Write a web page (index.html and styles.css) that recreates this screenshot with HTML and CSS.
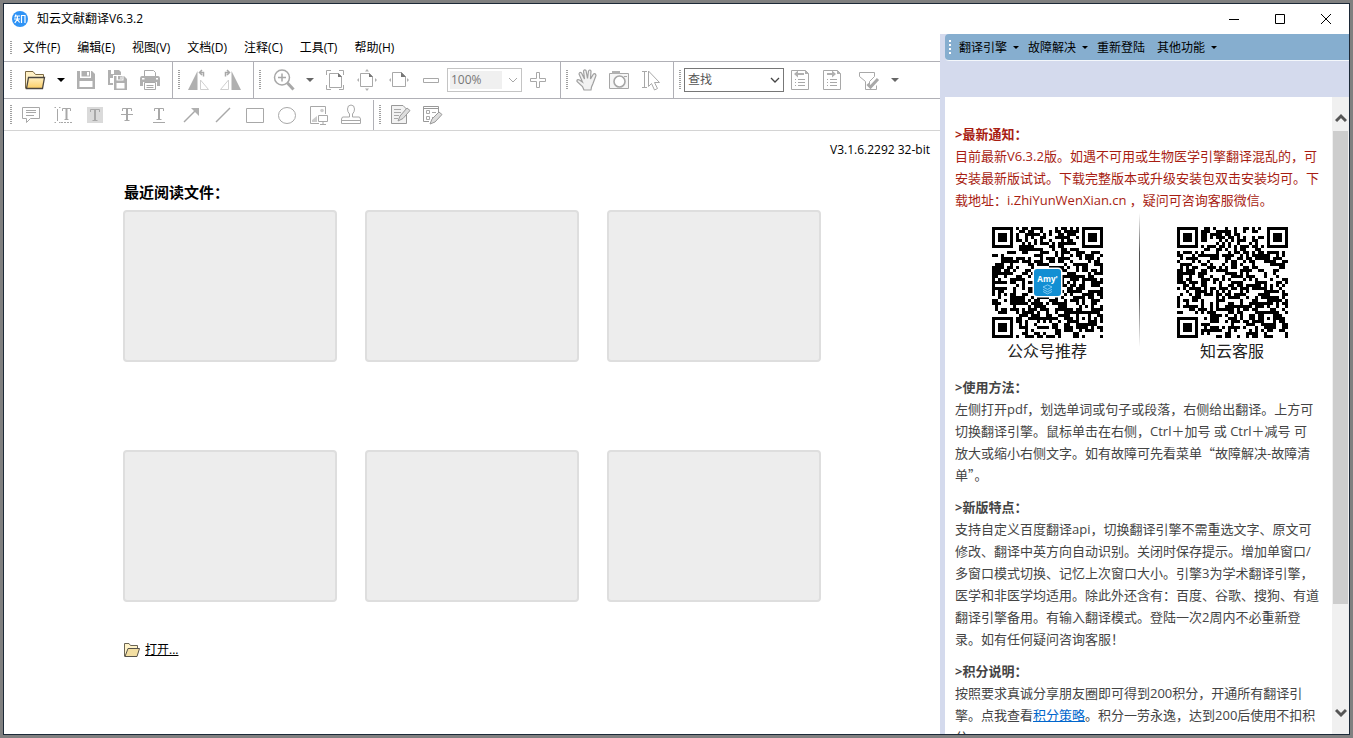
FILE: index.html
```html
<!DOCTYPE html>
<html lang="zh-CN">
<head>
<meta charset="utf-8">
<title>知云文献翻译V6.3.2</title>
<link rel="stylesheet" href="styles.css">
</head>
<body>
<div class="window">
  <header class="titlebar">
    <svg class="logo" viewBox="0 0 16 16"><circle cx="8" cy="8" r="8" fill="#2f93f5"/><path d="M4 3.500L2.800 6.500M3.500 5H8M2 8H8M5.400 5V8L2.800 12M5.400 8.500L7.600 11.500M9.500 12V4.500H13V12" fill="none" stroke="#fff" stroke-width="1.200"/></svg>
    <h1 class="title">知云文献翻译V6.3.2</h1>
    <div class="controls">
      <button class="control" aria-label="最小化"><svg viewBox="0 0 12 12"><path d="M1 6.500H11"/></svg></button>
      <button class="control" aria-label="最大化"><svg viewBox="0 0 12 12"><path d="M1.500 1.500H10.500V10.500H1.500Z"/></svg></button>
      <button class="control" aria-label="关闭"><svg viewBox="0 0 12 12"><path d="M1 1L11 11M11 1L1 11"/></svg></button>
    </div>
  </header>

  <div class="panes">
    <main class="reader">
      <nav class="menubar">
        <span class="grip"></span>
        <button class="menu">文件(F)</button>
        <button class="menu">编辑(E)</button>
        <button class="menu">视图(V)</button>
        <button class="menu">文档(D)</button>
        <button class="menu">注释(C)</button>
        <button class="menu">工具(T)</button>
        <button class="menu">帮助(H)</button>
      </nav>

      <div class="toolbar">
        <div class="group group-first">
          <span class="grip"></span>
          <button class="tool" aria-label="打开"><svg viewBox="0 0 24 24"><defs><linearGradient id="fold" x1="0" y1="0" x2="0" y2="1"><stop offset="0" stop-color="#fff0c4"/><stop offset="1" stop-color="#fbcd63"/></linearGradient></defs><path d="M2.500 20.500V3.500H10L12.500 6.500H20.500V11" fill="#fff0c4" stroke="#7c6a45"/><path d="M3.500 20.500L5.500 9.500H21.500L19.500 20.500Z" fill="url(#fold)" stroke="#4a4540" stroke-width="1.300"/></svg></button>
          <button class="drop dark" aria-label="打开选项"></button>
          <button class="tool" aria-label="保存"><svg viewBox="0 0 24 24"><path d="M3 3H18L21 6V21H3Z" class="f"/><path d="M6 3H17V10H6ZM5.500 13H18.500V19H5.500Z" fill="#fff"/><path d="M7.500 3H16V8.500H7.500Z" class="f"/><path d="M13 4H15V7.500H13Z" fill="#fff"/></svg></button>
          <button class="tool" aria-label="全部保存"><svg viewBox="0 0 24 24"><path d="M2 2H13L15 4V17H2Z" class="f"/><path d="M5 2V6H8V2M4 10H7V15H4Z" fill="#fff"/><path d="M7 7H18L21.500 10.500V22.500H7Z" fill="#fff"/><path d="M8 8H18L21 11V22H8Z" class="f"/><path d="M10.500 8H17.500V12.500H10.500ZM10.500 15H18.500V20.500H10.500Z" fill="#fff"/><path d="M12 8H16.500V11.500H12Z" class="f"/><path d="M14.500 8.500H15.500V11H14.500Z" fill="#fff"/></svg></button>
          <button class="tool" aria-label="打印"><svg viewBox="0 0 24 24"><path d="M6.500 8V2.500H15.500L17.500 4.500V8" class="s"/><path d="M2 11Q2 8 4 8H20Q22 8 22 11V18H2Z" class="f"/><path d="M5 14H19V21H5ZM4 10H6.500V11.500H4ZM18 10H20V11.500H18Z" fill="#fff"/><path d="M6.500 14.500H17.500V21.500H6.500ZM8.500 17.500H15.500M8.500 19.500H15.500" class="s"/></svg></button>
        </div>
        <div class="group group-tight">
          <span class="grip"></span>
          <button class="tool" aria-label="向左旋转"><svg viewBox="0 0 24 24"><path d="M1 22L10.500 3V22Z" class="f"/><path d="M13.500 12L21.500 21.500H13.500Z" fill="none" stroke="#d0d0d0"/><path d="M12.500 4.500H16.500V8.500M15 2L12.500 4.500L15 7" class="s thick"/></svg></button>
          <button class="tool" aria-label="向右旋转"><svg viewBox="0 0 24 24"><path d="M22 22L12.500 3V22Z" class="f"/><path d="M9.500 12L1.500 21.500H9.500Z" fill="none" stroke="#d0d0d0"/><path d="M10.500 4.500H6.500V8.500M8 2L10.500 4.500L8 7" class="s thick"/></svg></button>
        </div>
        <div class="group group-wide">
          <span class="grip"></span>
          <button class="tool" aria-label="放大工具"><svg viewBox="0 0 24 24"><circle cx="10" cy="9.500" r="7.500" class="s thick"/><path d="M10 5.500V13.500M6 9.500H14" class="s thick"/><path d="M15.500 15L21.500 21.500" class="s thicker"/></svg></button>
          <button class="drop" aria-label="缩放选项"></button>
          <button class="tool" aria-label="适合页面"><svg viewBox="0 0 24 24"><path d="M6.500 5.500H15.500L18.500 8.500V19.500H6.500Z" class="s"/><path d="M15 5L19 9H15Z" fill="#777"/><path d="M3.500 7V2.500H8M16 2.500H20.500V7M20.500 17V21.500H16M8 21.500H3.500V17" class="s"/></svg></button>
          <button class="tool" aria-label="实际大小"><svg viewBox="0 0 24 24"><path d="M5.500 5.500H14.500L17.500 8.500V18.500H5.500Z" class="s"/><path d="M14 5L18 9H14Z" fill="#777"/><path d="M12 1L14 3.500H10ZM12 23L10 20.500H14ZM2 12L4 10V14ZM22 12L20 10V14Z" class="f"/></svg></button>
          <button class="tool" aria-label="适合宽度"><svg viewBox="0 0 24 24"><path d="M5.500 4.500H14.500L18.500 8.500V18.500H5.500Z" class="s"/><path d="M14 4L19 9H14Z" fill="#777"/><path d="M2 12L4 10V14ZM22 12L20 10V14Z" class="f"/></svg></button>
          <button class="tool" aria-label="缩小"><svg viewBox="0 0 24 24"><path d="M4.500 10.500H19.500V14.500H4.500Z" class="s"/></svg></button>
          <span class="combo combo-zoom"><select aria-label="缩放比例" disabled><option>100%</option></select><svg viewBox="0 0 10 10"><path d="M1 3L5 7L9 3" class="s"/></svg></span>
          <button class="tool" aria-label="放大"><svg viewBox="0 0 24 24"><path d="M10.500 4.500H13.500V10.500H19.500V13.500H13.500V19.500H10.500V13.500H4.500V10.500H10.500Z" class="s"/></svg></button>
        </div>
        <div class="group">
          <span class="grip"></span>
          <button class="tool" aria-label="手形工具"><svg viewBox="0 0 24 24"><path d="M9 22L7.500 18.500L2 13.500Q1.500 11 4.500 12L7.500 14L4 6Q4.500 3.500 6.500 5L9.500 11L8.500 3Q9.500 1 11 2.500L12.500 10.500L13.500 3Q15 1 16 3L15.500 11L18.500 6Q20.500 5 21 7.500L18 15.500L16.500 19L16 22Z" fill="#f2f2f2" stroke="#a0a0a0" stroke-width="1.200"/></svg></button>
          <button class="tool" aria-label="截图"><svg viewBox="0 0 24 24"><path d="M2.500 5.500H21.500V20.500H2.500Z" fill="#f5f5f5" stroke="#a6a6a6"/><path d="M5 3H13V6H5Z" class="f"/><circle cx="12.500" cy="13.500" r="5.500" fill="#fff" stroke="#a6a6a6" stroke-width="1.600"/><path d="M17 8.500H20" class="s"/></svg></button>
          <button class="tool" aria-label="选择文本"><svg viewBox="0 0 24 24"><path d="M3 3.500H8M5.500 3.500V19.500M3 19.500H8" class="s"/><path d="M9.500 3L20.500 14.500H15.500L18.500 20.500L15.500 22L12.500 15.500L9.500 18.500Z" class="s"/></svg></button>
        </div>
        <div class="group group-last">
          <span class="grip"></span>
          <span class="combo combo-find"><select aria-label="查找"><option>查找</option></select><svg viewBox="0 0 10 10"><path d="M1 3L5 7L9 3" fill="none" stroke="#444" stroke-width="1.300"/></svg></span>
          <button class="tool" aria-label="查找上一个"><svg viewBox="0 0 24 24"><path d="M3.500 2.500H17.500L20.500 5.500V21.500H3.500Z" class="s"/><path d="M17 2L21 6H17Z" class="f"/><path d="M6 6L10 2.500V5H16V7H10V9.500Z" class="f"/><path d="M7 11.500H8M10 11.500H17M7 14.500H8M10 14.500H17M7 17.500H8M10 17.500H17" class="s"/></svg></button>
          <button class="tool" aria-label="查找下一个"><svg viewBox="0 0 24 24"><path d="M3.500 2.500H17.500L20.500 5.500V21.500H3.500Z" class="s"/><path d="M17 2L21 6H17Z" class="f"/><path d="M16 6L12 2.500V5H7V7H12V9.500Z" class="f"/><path d="M7 11.500H8M10 11.500H17M7 14.500H8M10 14.500H17M7 17.500H8M10 17.500H17" class="s"/></svg></button>
          <button class="tool filter" aria-label="筛选"><svg viewBox="0 0 24 24"><path d="M2.500 4.500H17.500V8.500L12.500 13.500V16M2.500 4.500V8.500L8.500 13.500V21.500H19.500V17.500" class="s"/><path d="M10.500 16L13.500 19L21 11" class="s thicker"/></svg></button>
          <button class="drop" aria-label="筛选选项"></button>
        </div>
      </div>

      <div class="toolbar toolbar-notes">
        <div class="group group-notes">
          <span class="grip"></span>
          <button class="tool" aria-label="附注"><svg viewBox="0 0 24 24"><path d="M3.500 4.500H20.500V15.500H11.500L7.500 19.500V15.500H3.500ZM7 7.500H17M7 9.500H17M7 12.500H15" class="s"/></svg></button>
          <button class="tool" aria-label="插入文本"><svg viewBox="0 0 24 24"><path d="M3.500 4.500H5M8 4.500H9.500M6.500 6V18M3.500 19.500H5M8 19.500H9.500" class="s"/><path d="M11.500 8V5.500H19.500V8M13.500 16.500H17.500" class="s"/><path d="M15.500 5V16.500" class="s bar"/><path d="M10 19.500H21" class="s" stroke-dasharray="2 1"/></svg></button>
          <button class="tool" aria-label="高亮文本"><svg viewBox="0 0 24 24"><path d="M4 4H20V20H4Z" fill="#dadada"/><path d="M7.500 9V6.500H16.500V9M9.500 17.500H14.500" class="s"/><path d="M12 6V17.500" class="s bar"/></svg></button>
          <button class="tool" aria-label="删除线"><svg viewBox="0 0 24 24"><path d="M7.500 8V5.500H16.500V8M9.500 17.500H14.500M6 11.500H18" class="s"/><path d="M12 5V17.500" class="s bar"/></svg></button>
          <button class="tool" aria-label="下划线"><svg viewBox="0 0 24 24"><path d="M7.500 8V5.500H16.500V8M9.500 16.500H14.500M6 19.500H18" class="s"/><path d="M12 5V16.500" class="s bar"/></svg></button>
          <button class="tool" aria-label="箭头"><svg viewBox="0 0 24 24"><path d="M5 19L16 8" class="s thick"/><path d="M12 5H20V13Z" class="f"/></svg></button>
          <button class="tool" aria-label="直线"><svg viewBox="0 0 24 24"><path d="M5 19L19 5" class="s thick"/></svg></button>
          <button class="tool" aria-label="矩形"><svg viewBox="0 0 24 24"><path d="M3.500 5.500H20.500V19.500H3.500Z" class="s"/></svg></button>
          <button class="tool" aria-label="椭圆"><svg viewBox="0 0 24 24"><ellipse cx="12" cy="12.500" rx="8.500" ry="8" class="s"/></svg></button>
          <button class="tool" aria-label="图像"><svg viewBox="0 0 24 24"><path d="M12 20.500H3.500V3.500H18.500V11" class="s"/><circle cx="15" cy="7.500" r="1.800" fill="#ccc"/><path d="M5 19V17L10 13V19Z" fill="#ccc"/><path d="M11.500 12.500H20.500V18.500H11.500ZM16 18.500V21M13 21.500H19" class="s"/></svg></button>
          <button class="tool" aria-label="图章"><svg viewBox="0 0 24 24"><path d="M10.500 14V11Q8.500 9 8.500 6A3.500 4 0 0 1 15.500 6Q15.500 9 13.500 11V14H20.500L21.500 16V20.500H2.500V16L3.500 14ZM2.500 17.500H21.500" class="s"/></svg></button>
        </div>
        <div class="group group-forms">
          <span class="grip"></span>
          <button class="tool" aria-label="编辑内容"><svg viewBox="0 0 24 24"><path d="M3.500 2.500H15L18.500 6V20.500H3.500Z" fill="#f2f2f2" stroke="#999"/><path d="M6 6.500H13M6 9.500H13M6 12.500H11M6 15.500H10" class="s"/><path d="M10 18L12 13L19 5L22 7.500L15 15.500Z" fill="#ddd" stroke="#999"/></svg></button>
          <button class="tool" aria-label="编辑表单"><svg viewBox="0 0 24 24"><path d="M3.500 3.500H18.500V10M3.500 3.500V18.500H9M3.500 5.500H18.500" fill="none" stroke="#999"/><path d="M6.500 7.500H9.500V10.500H6.500ZM6.500 13.500H9.500V16.500H6.500ZM12 9.500H16M12 14.500H14" class="s"/><path d="M10 21L12 16L19 9L22 11.500L15 19Z" fill="#ddd" stroke="#999"/></svg></button>
        </div>
      </div>

      <section class="start">
        <p class="version">V3.1.6.2292 32-bit</p>
        <div class="recent">
          <h2 class="recent-title">最近阅读文件：</h2>
          <div class="cards">
            <div class="card"></div><div class="card"></div><div class="card"></div>
            <div class="card"></div><div class="card"></div><div class="card"></div>
          </div>
          <a class="open" href="#open"><svg viewBox="0 0 17 14"><path d="M1.500 13.500V.5H6L7.500 2.500H14.500V5.500" fill="#fff3c9" stroke="#6b6555"/><path d="M2 13.500L5 5.500H16.500L14 13.500Z" fill="#f3dfa3" stroke="#57534a"/></svg><span>打开...</span></a>
        </div>
      </section>
    </main>

    <aside class="side">
      <nav class="sidebar-menu">
        <span class="grip grip-light"></span>
        <button class="menu arrow">翻译引擎</button>
        <button class="menu arrow">故障解决</button>
        <button class="menu">重新登陆</button>
        <button class="menu arrow">其他功能</button>
      </nav>
      <div class="article-frame">
        <article class="article">
          <section class="notice">
            <h3>&gt;最新通知：</h3>
            <p>目前最新V6.3.2版。如遇不可用或生物医学引擎翻译混乱的，可<br>安装最新版试试。下载完整版本或升级安装包双击安装均可。下<br>载地址：i.ZhiYunWenXian.cn ，疑问可咨询客服微信。</p>
          </section>
          <div class="codes">
            <figure class="code"><svg class="qr" data-seed="7" data-badge="yes" viewBox="0 0 37 37"></svg><figcaption>公众号推荐</figcaption></figure>
            <span class="divider"></span>
            <figure class="code"><svg class="qr" data-seed="91" viewBox="0 0 37 37"></svg><figcaption>知云客服</figcaption></figure>
          </div>
          <section>
            <h3>&gt;使用方法：</h3>
            <p>左侧打开pdf，划选单词或句子或段落，右侧给出翻译。上方可<br>切换翻译引擎。鼠标单击在右侧，Ctrl＋加号 或 Ctrl＋减号 可<br>放大或缩小右侧文字。如有故障可先看菜单<span class="cjk">“</span>故障解决-故障清<br>单<span class="cjk">”</span>。</p>
          </section>
          <section>
            <h3>&gt;新版特点：</h3>
            <p>支持自定义百度翻译api，切换翻译引擎不需重选文字、原文可<br>修改、翻译中英方向自动识别。关闭时保存提示。增加单窗口/<br>多窗口模式切换、记忆上次窗口大小。引擎3为学术翻译引擎，<br>医学和非医学均适用。除此外还含有：百度、谷歌、搜狗、有道<br>翻译引擎备用。有输入翻译模式。登陆一次2周内不必重新登<br>录。如有任何疑问咨询客服！</p>
          </section>
          <section>
            <h3>&gt;积分说明：</h3>
            <p>按照要求真诚分享朋友圈即可得到200积分，开通所有翻译引<br>擎。点我查看<a href="#points">积分策略</a>。积分一劳永逸，达到200后使用不扣积<br>分。</p>
          </section>
        </article>
        <div class="scrollbar">
          <svg viewBox="0 0 12 12"><path d="M1 9L6 4L11 9"/></svg>
          <span class="thumb"></span>
          <svg viewBox="0 0 12 12"><path d="M1 3L6 8L11 3"/></svg>
        </div>
      </div>
    </aside>
  </div>
</div>
<script src="qr.js"></script>
</body>
</html>
```

FILE: styles.css
```css
* { box-sizing: border-box; }
body {
  margin: 0;
  padding: 3px;
  height: 100vh;
  background: #808080;
  color: #000;
  font: 12px/16px "Open Sans", "Noto Sans CJK SC", sans-serif;
}
h1, h2, h3, p, figure { margin: 0; }
button { padding: 0; border: 0; background: none; color: inherit; font: inherit; }
.window {
  display: flex;
  flex-direction: column;
  height: 100%;
  border: 1px solid #1c2938;
  background: #fff;
  overflow: hidden;
}

.titlebar { display: flex; align-items: center; flex: none; height: 30px; padding-left: 8px; }
.logo { width: 16px; height: 16px; }
.title { margin-left: 9px; font-size: 12px; font-weight: 400; }
.controls { display: flex; margin-left: auto; height: 100%; }
.control { display: flex; align-items: center; justify-content: center; width: 46px; }
.control svg { width: 12px; height: 12px; fill: none; stroke: #000; }

.panes { display: grid; grid-template-columns: minmax(0, 1fr) 409px; flex: 1; min-height: 0; }
.reader { display: flex; flex-direction: column; min-width: 0; }
.menubar { display: flex; align-items: center; gap: 17px; height: 28px; padding-left: 6px; border-bottom: 1px solid #b0b0b6; }
.menubar .grip { height: 13px; margin-right: -6px; }
.menu { white-space: nowrap; }
.grip {
  flex: none;
  width: 2px;
  height: 20px;
  background: repeating-linear-gradient(#a0a0a0 0 1px, #fff 1px 2px);
}
.grip-light { height: 16px; background: repeating-linear-gradient(#fff 0 2px, transparent 2px 4px); }

.toolbar { display: flex; height: 37px; border-bottom: 1px solid #b0b0b6; }
.toolbar-notes { height: 32px; padding-top: 1px; border-color: #d4d4d4; }
.group { display: flex; align-items: center; padding: 0 6px 0 5px; border-right: 1px solid #b0b0b6; }
.group .grip { margin-right: 3px; }
.group-first, .group-notes { padding-left: 6px; }
.group-first .grip, .group-wide .grip { margin-right: 7px; }
.group-last, .group-forms { border-right: 0; }
.tool { display: flex; align-items: center; justify-content: center; flex: none; width: 32px; height: 32px; }
.tool svg { width: 24px; height: 24px; }
.filter { margin-left: 5px; }
.f { fill: #b0b0b0; }
.s { fill: none; stroke: #a8a8a8; stroke-width: 1; }
.thick { stroke-width: 1.5; }
.bar { stroke-width: 2; }
.thicker { stroke-width: 3; }
.drop { display: flex; justify-content: center; width: 19px; }
.drop::after, .arrow::after { content: ""; border: 4px solid transparent; border-top-color: #666; border-bottom: 0; }
.dark::after { border-top-color: #000; }
.combo { display: flex; align-items: center; justify-content: space-between; height: 24px; border: 1px solid #c4c4c4; }
.combo select { height: 18px; padding: 0 0 0 1px; border: 0; appearance: none; color: #555; font: inherit; background: #fff; opacity: 1; }
.combo svg { flex: none; width: 10px; height: 10px; margin-right: 3px; }
.combo-zoom { width: 75px; padding-left: 2px; }
.combo-zoom select { width: 52px; color: #777; background: #f0f0f0; }
.combo-find { width: 100px; border-color: #777; padding-left: 2px; }
.combo-find select { width: 76px; }

.start { flex: 1; min-height: 0; padding: 11px 10px 0 0; overflow: hidden; }
.version { text-align: right; }
.recent { padding: 23px 0 0 119px; }
.recent-title { padding-left: 1px; font-size: 15px; line-height: 22px; }
.cards { display: grid; grid-template-columns: repeat(3, minmax(0, 214px)); gap: 88px 28px; margin-top: 7px; }
.card { height: 152px; border: 2px solid #dedede; border-radius: 4px; background: #ededed; }
.open { display: inline-flex; align-items: center; gap: 5px; margin-top: 40px; color: #000; }
.open svg { width: 17px; height: 14px; }

.side { display: flex; flex-direction: column; min-width: 0; min-height: 0; padding-left: 5px; background: #d4daed; }
.sidebar-menu {
  display: flex;
  align-items: center;
  flex: none;
  height: 27px;
  padding: 1px 0 0 4px;
  gap: 12px;
  border-bottom: 1px solid #f4f7fb;
  border-radius: 4px 0 0 4px;
  background: #86aecf;
}
.sidebar-menu .grip { margin-right: -4px; }
.arrow { display: flex; align-items: center; gap: 6px; margin-right: -3px; }
.arrow::after { border-width: 3px; border-top-color: #000; border-bottom: 0; }
.article-frame { display: flex; flex: 1; min-height: 0; margin-top: 36px; background: #fff; }
.article {
  flex: 1;
  min-width: 0;
  padding: 26px 8px 0 10px;
  overflow: hidden;
  color: #444;
  font-size: 13px;
  line-height: 22px;
  white-space: nowrap;
}
.article section + section { margin-top: 10px; }
.article h3 { font-size: 13px; }
.article a { color: #0066cc; }
.cjk { font-family: "Noto Sans CJK SC", sans-serif; }
.article .notice { color: #a81d12; }
.codes { display: grid; grid-template-columns: 1fr 1px 1fr; height: 155px; margin-bottom: 10px; }
.code { display: flex; flex-direction: column; align-items: center; padding-top: 16px; }
.qr { width: 111px; height: 111px; }
.code figcaption { margin-top: 2px; color: #222; font-size: 16px; }
.divider { height: 134px; margin-top: 2px; background: linear-gradient(transparent, #555 30%, #555 60%, transparent); }
.scrollbar { display: flex; flex-direction: column; align-items: center; width: 17px; padding: 15px 0; background: #f0f0f0; }
.scrollbar svg { flex: none; width: 12px; height: 12px; fill: none; stroke: #555; stroke-width: 3; }
.thumb { width: 15px; height: 78%; margin: 7px 0 auto; background: #cdcdcd; }
```

FILE: qr.js
```js
const SIZE = 37;

function finder(x, y, ox, oy) {
  const dx = x - ox, dy = y - oy;
  if (dx < -1 || dy < -1 || dx > 7 || dy > 7) return null;
  const ring = Math.max(Math.abs(dx - 3), Math.abs(dy - 3));
  return ring === 3 || ring < 2;
}

document.querySelectorAll(".qr").forEach((svg) => {
  let state = Number(svg.dataset.seed);
  let d = "";
  for (let y = 0; y < SIZE; y++) {
    for (let x = 0; x < SIZE; x++) {
      state = (state * 1103515245 + 12345) % 2147483648;
      let on = state / 2147483648 < 0.54;
      [[0, 0], [30, 0], [0, 30]].forEach(([ox, oy]) => {
        const mark = finder(x, y, ox, oy);
        if (mark !== null) on = mark;
      });
      const ring = Math.max(Math.abs(x - 30), Math.abs(y - 30));
      if (ring < 3) on = ring !== 1;
      if (on) d += `M${x} ${y}h1v1h-1z`;
    }
  }
  let art = `<path d="${d}" fill="#000" shape-rendering="crispEdges"/>`;
  if (svg.dataset.badge) {
    art += '<rect x="13.500" y="13.500" width="10" height="10" rx="1.500" fill="#fff"/>' +
      '<rect x="14" y="14" width="9" height="9" rx="1" fill="#128fd3"/>' +
      '<text x="18.500" y="18.200" font-size="2.700" font-weight="700" fill="#fff" text-anchor="middle">Amy\'</text>' +
      '<path d="M17 20l1.500-.7 1.500.7-1.500.8zM17 20.800l1.500.8 1.500-.8M17 21.500l1.500.8 1.500-.8" fill="none" stroke="#8fd0f5" stroke-width=".3"/>';
  }
  svg.innerHTML = art;
});
```
